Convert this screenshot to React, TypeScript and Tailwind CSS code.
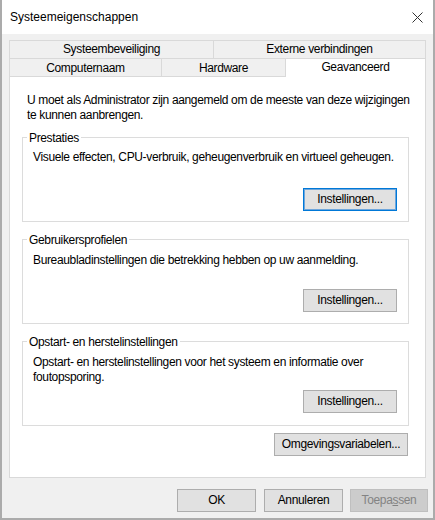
import type { ReactNode } from 'react';

function Tab({ className, children }: { className: string; children: ReactNode }) {
  return (
    <div
      className={`flex h-[18px] items-center justify-center border-l border-t border-[#d9d9d9] bg-[#f0f0f0] ${className}`}
    >
      {children}
    </div>
  );
}

function Button({
  className,
  variant = 'normal',
  children,
}: {
  className: string;
  variant?: 'normal' | 'default' | 'disabled';
  children: ReactNode;
}) {
  const look =
    variant === 'default'
      ? 'border-[#0078d7] bg-[#e1e1e1] shadow-[inset_0_0_0_1px_#6ea6dc] text-black'
      : variant === 'disabled'
        ? 'border-[#bfbfbf] bg-[#cccccc] text-[#838383]'
        : 'border-[#adadad] bg-[#e1e1e1] text-black';
  return (
    <button type="button" className={`flex h-[23px] items-center justify-center border ${look} ${className}`}>
      {children}
    </button>
  );
}

function GroupBox({
  title,
  className,
  children,
}: {
  title: string;
  className: string;
  children: ReactNode;
}) {
  return (
    <div className={`flex w-[387px] flex-col border border-[#dcdcdc] pl-[10px] pr-[11px] ${className}`}>
      <span className="-ml-[6px] -mt-[7px] w-fit bg-white px-[2px]">{title}</span>
      {children}
    </div>
  );
}

export default function App() {
  return (
    <div className="flex h-[520px] w-[435px] flex-col border-x-2 border-b-2 border-[#ababab] bg-[#f0f0f0] font-['Liberation_Sans',Arial,sans-serif] text-[12px] leading-[15px] tracking-[-0.35px] text-black">
      <div className="flex h-[34px] shrink-0 items-center justify-between bg-white pl-[8px] pr-[10px]">
        <span className="tracking-normal">Systeemeigenschappen</span>
        <svg width="11" height="11" viewBox="0 0 11 11" className="text-[#333]">
          <path d="M0.5 0.5 L10.5 10.5 M10.5 0.5 L0.5 10.5" stroke="currentColor" strokeWidth="1" fill="none" />
        </svg>
      </div>

      <div className="mx-[7px] mt-[6px] flex flex-col">
        <div className="flex h-[18px]">
          <Tab className="w-[204px]">Systeembeveiliging</Tab>
          <Tab className="w-[213px] border-r">Externe verbindingen</Tab>
        </div>
        <div className="flex h-[18px] items-start">
          <Tab className="w-[152px] pt-[2px]">Computernaam</Tab>
          <Tab className="w-[124px] pt-[2px]">Hardware</Tab>
          <div className="relative z-10 flex h-[19px] w-[141px] items-center justify-center border-x border-t border-[#d9d9d9] bg-white pb-[1px]">
            Geavanceerd
          </div>
        </div>

        <div className="flex h-[402px] flex-col border border-[#d9d9d9] bg-white pt-[16px]">
          <p className="pl-[17px] pr-[10px]">
            U moet als Administrator zijn aangemeld om de meeste van deze wijzigingen te kunnen aanbrengen.
          </p>

          <div className="ml-[12px] flex flex-col">
            <GroupBox title="Prestaties" className="mt-[14px] pb-[10px]">
              <p className="mt-[4px]">Visuele effecten, CPU-verbruik, geheugenverbruik en virtueel geheugen.</p>
              <div className="mt-[23px] flex justify-end">
                <Button className="w-[94px]" variant="default">
                  Instellingen...
                </Button>
              </div>
            </GroupBox>

            <GroupBox title="Gebruikersprofielen" className="mt-[17px] pb-[11px]">
              <p className="mt-[5px]">Bureaubladinstellingen die betrekking hebben op uw aanmelding.</p>
              <div className="mt-[21px] flex justify-end">
                <Button className="w-[94px]">Instellingen...</Button>
              </div>
            </GroupBox>

            <GroupBox title="Opstart- en herstelinstellingen" className="mt-[17px] pb-[12px]">
              <p className="mt-[5px] pr-[20px]">
                Opstart- en herstelinstellingen voor het systeem en informatie over foutopsporing.
              </p>
              <div className="mt-[5px] flex justify-end">
                <Button className="w-[94px]">Instellingen...</Button>
              </div>
            </GroupBox>

            <div className="mt-[7px] flex w-[386px] justify-end">
              <Button className="w-[134px]">Omgevingsvariabelen...</Button>
            </div>
          </div>
        </div>
      </div>

      <div className="mr-[5px] mt-[11px] flex justify-end">
        <Button className="w-[79px]">OK</Button>
        <Button className="ml-[8px] w-[79px]">Annuleren</Button>
        <Button className="ml-[7px] w-[78px]" variant="disabled">
          <span>
            Toepa<span className="underline">s</span>sen
          </span>
        </Button>
      </div>
    </div>
  );
}
